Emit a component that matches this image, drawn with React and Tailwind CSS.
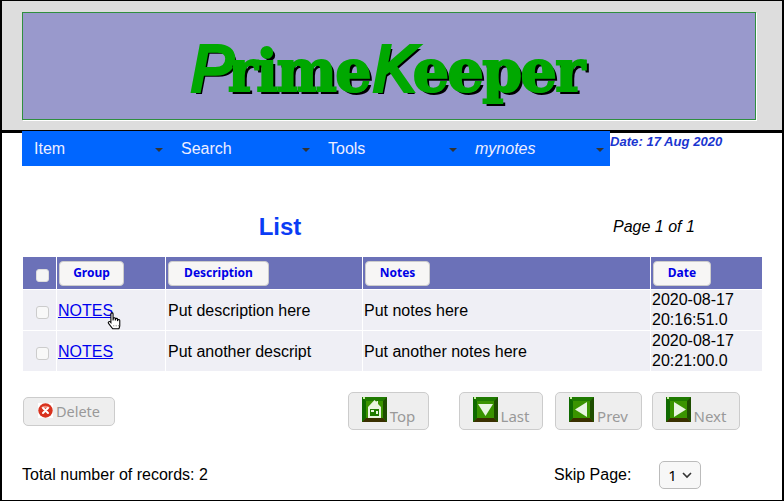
const sans = { fontFamily: '"Liberation Sans", Arial, sans-serif' };

const menus = [
  { label: "Item" },
  { label: "Search" },
  { label: "Tools" },
  { label: "mynotes", italic: true },
];

const rows = [
  { description: "Put description here", notes: "Put notes here", date: "2020-08-17", time: "20:16:51.0", hover: true },
  { description: "Put another descript", notes: "Put another notes here", date: "2020-08-17", time: "20:21:00.0" },
];

const BevelIcon = ({ children }) => (
  <svg width="25" height="25" viewBox="0 0 25 25" className="shrink-0">
    <rect width="25" height="25" fill="#2f8a00" />
    <polygon points="0,0 25,0 21,4 4,4" fill="#1f7a00" />
    <polygon points="0,0 4,4 4,21 0,25" fill="#0f6a00" />
    <polygon points="25,0 25,25 21,21 21,4" fill="#1d4d00" />
    <polygon points="0,25 4,21 21,21 25,25" fill="#3a3000" />
    <rect x="4" y="4" width="17" height="17" fill="#3a9400" />
    <rect x="1" y="0" width="2" height="2" fill="#c8f0a0" />
    {children}
  </svg>
);

const HomeGlyph = () => (
  <g>
    <polygon points="12.5,3 14.5,5 14.5,4 16,4 16,7 19,10 19,21 6,21 6,10" fill="#e8f5e0" />
    <rect x="8" y="12" width="9" height="7" fill="#1f7a00" />
    <rect x="9" y="13" width="3" height="2" fill="#e8f5e0" />
    <rect x="14" y="14" width="2" height="3" fill="#e8f5e0" />
  </g>
);

const NavButton = ({ label, glyph, className }) => (
  <button
    className={`flex h-[38px] items-start justify-center gap-[3px] rounded-[5px] border border-[#ccc] bg-[#eee] pt-1 text-[15px] text-[#999] ${className}`}
    style={{ fontFamily: '"Noto Sans", sans-serif' }}
  >
    <BevelIcon>{glyph}</BevelIcon>
    <span className="mt-[10px] leading-[19px]">{label}</span>
  </button>
);

const HeadButton = ({ label, className }) => (
  <button
    className={`h-[25px] rounded-[4px] border border-[#ccc] bg-[#f7f6f5] text-[12px] leading-none font-bold text-[#0000e6] ${className}`}
    style={{ fontFamily: '"Noto Sans", sans-serif' }}
  >
    {label}
  </button>
);

const Box = ({ dark }) => (
  <span
    className={`inline-block h-[13px] w-[13px] rounded-[3px] border ${
      dark ? "border-[#ddd] bg-[#f5f5f5]" : "border-[#ccc] bg-[#f8f8f8]"
    }`}
  />
);

export default function App() {
  return (
    <div
      className="flex h-[501px] w-[784px] flex-col overflow-hidden border-r-2 border-b border-l-2 border-black bg-white text-black"
      style={sans}
    >
      <div className="h-[133px] shrink-0 border-t border-b-[3px] border-black bg-[#ddd] px-5 pt-[11px]">
        <div className="flex h-[108px] w-[734px] items-center justify-center border border-[#2f8f3f] bg-[#9999cc] shadow-[1px_1px_0_#fff]">
          <h1
            className="mt-[6px] -ml-[3px] flex items-baseline text-[#00a800] [-webkit-text-stroke:2px_#00a800] [text-shadow:3px_3px_0_#000]"
            style={{ fontFamily: '"DejaVu Serif", serif' }}
          >
            <span className="text-[64px] leading-none italic [-webkit-text-stroke:4px_#00a800]" style={sans}>P</span>
            <span className="-ml-[6px] text-[57px] leading-none font-bold tracking-[-1.5px]">rime</span>
            <span className="ml-[3px] text-[64px] leading-none italic [-webkit-text-stroke:4px_#00a800]" style={sans}>K</span>
            <span className="-ml-[3px] text-[57px] leading-none font-bold tracking-[-1.5px]">eeper</span>
          </h1>
        </div>
      </div>

      <div className="flex items-start pl-5">
        <nav className="-mt-[2px] flex h-[35px] w-[588px] bg-[#0066ff]">
          {menus.map((m) => (
            <div key={m.label} className="flex w-[147px] items-center justify-between pr-[6px] pl-3 text-[16px] text-[#eef]">
              <span className={m.italic ? "italic" : ""}>{m.label}</span>
              <span className="mt-[3px] border-x-[4px] border-t-[4px] border-x-transparent border-t-[#333]" />
            </div>
          ))}
        </nav>
        <div className="mt-px text-[13.1px] leading-[15px] font-bold text-[#1a35d0] italic">Date: 17 Aug 2020</div>
      </div>

      <div className="mt-[46px] flex h-[30px] items-center pl-5">
        <h2 className="w-[516px] text-center text-[24px] font-bold text-[#0a3cf5]">List</h2>
        <span className="ml-[75px] text-[16px] italic">Page 1 of 1</span>
      </div>

      <table className="mt-[15px] ml-[21px] w-[739px] table-fixed border-separate border-spacing-0 text-[16px] leading-[20px]">
        <colgroup>
          <col className="w-[34px]" />
          <col className="w-[109px]" />
          <col className="w-[197px]" />
          <col className="w-[288px]" />
          <col className="w-[111px]" />
        </colgroup>
        <thead>
          <tr className="h-[33px] bg-[#6b71b8]">
            <th className="border-r border-b border-white pl-[6px] text-center align-middle"><span className="flex justify-center pt-[4px]"><Box dark /></span></th>
            <th className="border-r border-b border-white pl-[2px] text-left"><HeadButton label="Group" className="w-[65px]" /></th>
            <th className="border-r border-b border-white pl-[2px] text-left"><HeadButton label="Description" className="w-[101px]" /></th>
            <th className="border-r border-b border-white pl-[2px] text-left"><HeadButton label="Notes" className="w-[65px]" /></th>
            <th className="border-b border-white pl-[2px] text-left"><HeadButton label="Date" className="w-[58px]" /></th>
          </tr>
        </thead>
        <tbody>
          {rows.map((r, i) => (
            <tr key={r.time} className={`bg-[#efeff5] ${i === 0 ? "h-[41px]" : "h-[40px]"}`}>
              <td className={`border-r border-white pl-[6px] text-center ${i === 0 ? "border-b" : ""}`}><span className="flex justify-center pt-[5px]"><Box /></span></td>
              <td className={`relative border-r border-white pt-[2px] pl-px ${i === 0 ? "border-b" : ""}`}>
                <a href="#notes" className="text-[#0000ee] underline">NOTES</a>
                {r.hover && (
                  <svg width="17" height="18" viewBox="1 1 14 15" className="absolute top-[22px] left-[49px]">
                    <path
                      d="M4 1.5c0-1 1.8-1 1.8 0V7l.2-1.6c0-.9 1.700-.9 1.700 0V7l.2-1c0-.9 1.600-.9 1.600 0v1.500l.3-.8c.2-.8 1.600-.6 1.600.3v4.500c0 1-.4 1.500-.8 2.500H5.500L2 9.500C1.300 8.500 2.500 7.400 3.500 8.200L4 8.800z"
                      fill="#fff"
                      stroke="#000"
                      strokeWidth="0.9"
                      transform="translate(1 1)"
                    />
                    <path d="M7 12.500h.8M9 12.500h.8M11 12.500h.8" stroke="#666" strokeWidth="0.8" />
                  </svg>
                )}
              </td>
              <td className={`border-r border-white pt-[2px] pl-[2px] ${i === 0 ? "border-b" : ""}`}>{r.description}</td>
              <td className={`border-r border-white pt-[2px] pl-px ${i === 0 ? "border-b" : ""}`}>{r.notes}</td>
              <td className={`border-white pl-px ${i === 0 ? "border-b" : ""}`}>
                {r.date}
                <br />
                {r.time}
              </td>
            </tr>
          ))}
        </tbody>
      </table>

      <div className="mt-[21px] flex items-start pl-[21px]">
        <button
          className="mt-[5px] flex h-[29px] w-[92px] items-center justify-center gap-[3px] rounded-[5px] border border-[#ccc] bg-[#eee] text-[14.500px] text-[#999]"
          style={{ fontFamily: '"Noto Sans", sans-serif' }}
        >
          <svg width="15" height="15" viewBox="0 0 15 15" className="-mt-[2px] shrink-0">
            <rect width="15" height="15" fill="#fff" />
            <circle cx="7.500" cy="7.500" r="7.200" fill="#d8321e" />
            <path d="M3 5a5 4 0 0 1 9 0z" fill="#ef8a78" />
            <path d="M5 5l5 5M10 5l-5 5" stroke="#fff" strokeWidth="2" strokeLinecap="round" />
          </svg>
          Delete
        </button>
        <NavButton label="Top" glyph={<HomeGlyph />} className="ml-[233px] w-[81px]" />
        <NavButton
          label="Last"
          glyph={<polygon points="5,7 20,7 12.500,19" fill="#e8f5e0" />}
          className="ml-[30px] w-[84px]"
        />
        <NavButton
          label="Prev"
          glyph={<polygon points="18,5 18,20 6,12.500" fill="#e8f5e0" />}
          className="ml-3 w-[87px]"
        />
        <NavButton
          label="Next"
          glyph={<polygon points="8,5 8,20 20,12.500" fill="#e8f5e0" />}
          className="ml-[10px] w-[88px]"
        />
      </div>

      <div className="mt-[31px] flex items-center pl-5 text-[16px]">
        <span className="w-[532px]">Total number of records: 2</span>
        <span className="w-[105px]">Skip Page:</span>
        <span
          className="flex h-[28px] w-[42px] items-center justify-center gap-[5px] rounded-[5px] border border-[#bbb] bg-[#f7f7f7] text-[15px]"
          style={{ fontFamily: '"Noto Sans", sans-serif' }}
        >
          1
          <svg width="10" height="7" viewBox="0 0 10 7">
            <path d="M1 1l4 4 4-4" fill="none" stroke="#333" strokeWidth="1.600" />
          </svg>
        </span>
      </div>
    </div>
  );
}
